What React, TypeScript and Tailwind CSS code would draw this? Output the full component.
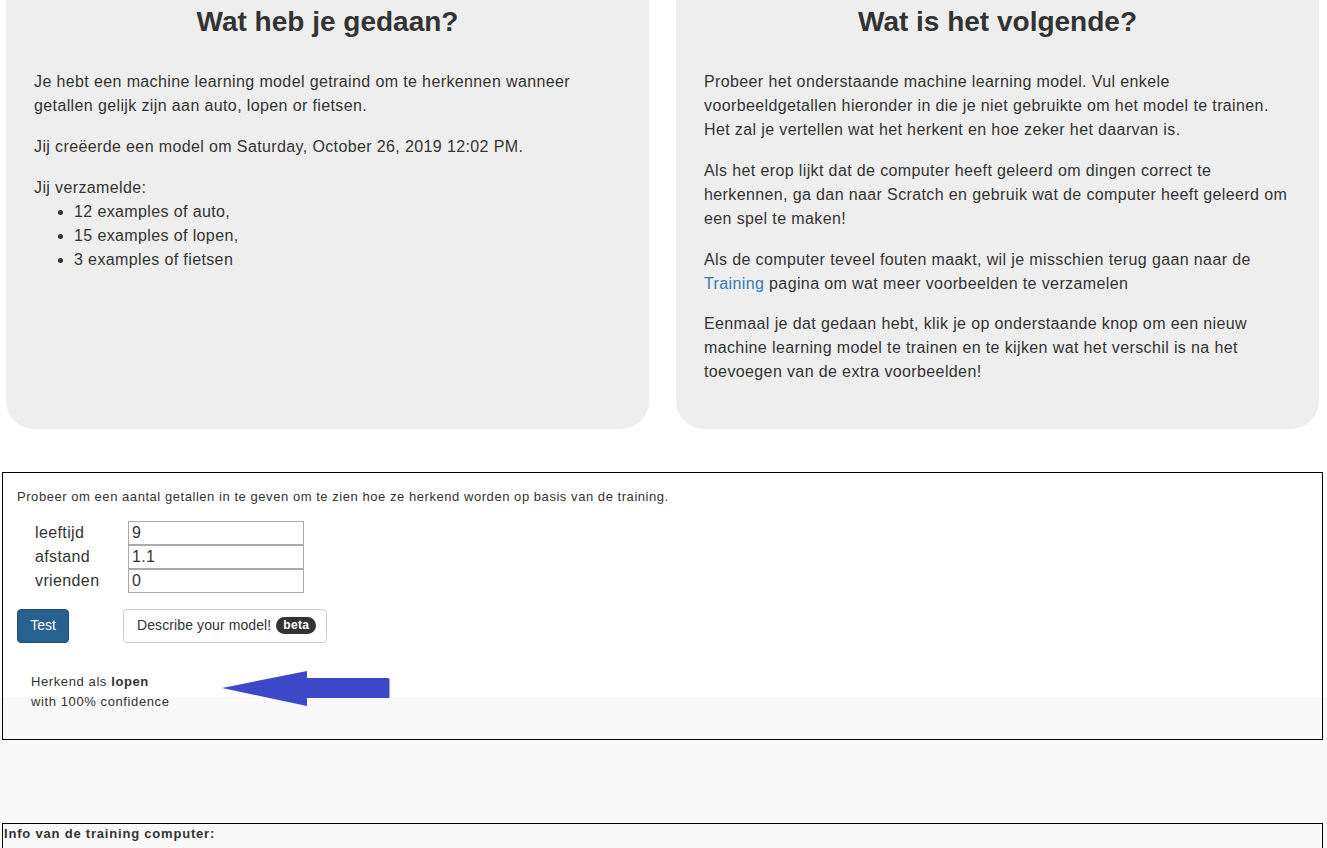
import React from "react";

function Arrow() {
  return (
    <svg width="168" height="36" viewBox="0 0 168 36" className="shrink-0 block">
      <path d="M0 17 L85 0 L85 7 L166 7 Q167.5 7 167.5 8.5 L167.5 27 L85 27 L85 35 Z" fill="#3d48c9" />
    </svg>
  );
}

export default function App() {
  return (
    <div className="min-h-[848px] bg-[#f9f9f9] font-['Liberation_Sans',Arial,sans-serif] text-[#333]">
      <div className="h-[697px] bg-white">
        <div className="flex items-stretch gap-[27px] pl-[6px]">
          <div className="w-[643px] rounded-b-[28px] bg-[#eeeeee] pt-[7px] px-[28px] pb-[28px] text-[16px] leading-[24px] tracking-[0.38px]">
            <h2 className="text-center text-[28px] font-bold leading-[1.1] tracking-normal mb-[32px]">Wat heb je gedaan?</h2>
            <p className="mb-[17px] whitespace-nowrap">
              Je hebt een machine learning model getraind om te herkennen wanneer
              <br />
              getallen gelijk zijn aan auto, lopen or fietsen.
            </p>
            <p className="mb-[17px] whitespace-nowrap">Jij creëerde een model om Saturday, October 26, 2019 12:02 PM.</p>
            <div>Jij verzamelde:</div>
            <ul className="list-disc pl-[40px]">
              <li>12 examples of auto,</li>
              <li>15 examples of lopen,</li>
              <li>3 examples of fietsen</li>
            </ul>
          </div>
          <div className="w-[643px] rounded-b-[28px] bg-[#eeeeee] pt-[7px] px-[28px] pb-[28px] text-[16px] leading-[24px] tracking-[0.38px]">
            <h2 className="text-center text-[28px] font-bold leading-[1.1] tracking-normal mb-[32px]">Wat is het volgende?</h2>
            <p className="mb-[17px] whitespace-nowrap">
              Probeer het onderstaande machine learning model. Vul enkele
              <br />
              voorbeeldgetallen hieronder in die je niet gebruikte om het model te trainen.
              <br />
              Het zal je vertellen wat het herkent en hoe zeker het daarvan is.
            </p>
            <p className="mb-[17px] whitespace-nowrap">
              Als het erop lijkt dat de computer heeft geleerd om dingen correct te
              <br />
              herkennen, ga dan naar Scratch en gebruik wat de computer heeft geleerd om
              <br />
              een spel te maken!
            </p>
            <p className="mb-[16px] whitespace-nowrap">
              Als de computer teveel fouten maakt, wil je misschien terug gaan naar de
              <br />
              <a className="text-[#337ab7]">Training</a> pagina om wat meer voorbeelden te verzamelen
            </p>
            <p className="mb-[17px] whitespace-nowrap">
              Eenmaal je dat gedaan hebt, klik je op onderstaande knop om een nieuw
              <br />
              machine learning model te trainen en te kijken wat het verschil is na het
              <br />
              toevoegen van de extra voorbeelden!
            </p>
          </div>
        </div>

        <div className="mt-[43px] ml-[2px] w-[1321px] h-[268px] border border-black pt-[15px] pl-[14px]">
          <div className="text-[13px] leading-[18px] tracking-[0.55px]">
            Probeer om een aantal getallen in te geven om te zien hoe ze herkend worden op basis van de training.
          </div>
          <div className="mt-[15px] ml-[18px] grid grid-cols-[93px_176px] text-[16px] tracking-[0.38px]">
            <div className="h-[24px] leading-[24px]">leeftijd</div>
            <div className="h-[24px] border border-[#aaa] bg-white px-[3px] leading-[22px]">9</div>
            <div className="h-[24px] leading-[24px]">afstand</div>
            <div className="h-[24px] border border-[#aaa] bg-white px-[3px] leading-[22px]">1.1</div>
            <div className="h-[24px] leading-[24px]">vrienden</div>
            <div className="h-[24px] border border-[#aaa] bg-white px-[3px] leading-[22px]">0</div>
          </div>
          <div className="mt-[16px] flex items-center gap-[54px]">
            <button className="h-[34px] w-[52px] rounded-[4px] border border-[#204d74] bg-[#286090] text-[14px] text-white">
              Test
            </button>
            <button className="flex h-[34px] w-[204px] items-center rounded-[4px] border border-[#ccc] bg-white pl-[13px] text-[14px] text-[#333]">
              <span className="tracking-[0.1px]">Describe your model!</span>
              <span className="ml-[5px] rounded-[10px] bg-[#333] px-[7px] text-[12px] font-bold leading-[17px] tracking-[0.3px] text-white">beta</span>
            </button>
          </div>
          <div className="mt-[29px] ml-[14px] flex items-start">
            <div className="w-[191px] text-[13px] leading-[20px] tracking-[0.6px]">
              <div>
                Herkend als <b>lopen</b>
              </div>
              <div>with 100% confidence</div>
            </div>
            <div className="-mt-[1px]">
              <Arrow />
            </div>
          </div>
        </div>
      </div>

      <div className="mt-[126px] ml-[2px] w-[1321px] h-[60px] border border-black px-[1px] pt-[1px]">
        <div className="text-[13px] font-bold leading-[18px] tracking-[0.8px]">Info van de training computer:</div>
      </div>
    </div>
  );
}
